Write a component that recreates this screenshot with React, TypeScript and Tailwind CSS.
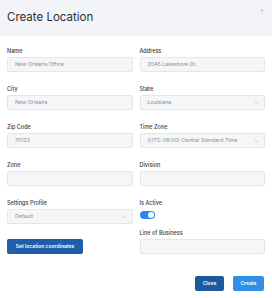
import React from "react";

const font = { fontFamily: "Inter, 'Noto Sans', sans-serif" };

function Label({ children }: { children: React.ReactNode }) {
  return (
    <div className="h-[8px] text-[5.5px] leading-[8px] font-medium text-[#3a3d42]">
      {children}
    </div>
  );
}

function Input({ value, select }: { value?: string; select?: boolean }) {
  return (
    <div className="mt-[2px] h-[15px] rounded-[2px] border border-[#e4e6ea] bg-[#f5f6f8] flex items-center justify-between pl-[7px] pr-[5px]">
      <span className="text-[5.3px] leading-none text-[#8a8e95]">{value}</span>
      {select && (
        <svg width="5" height="4" viewBox="0 0 5 4" className="shrink-0">
          <path d="M0.8 1.2 L2.5 2.8 L4.2 1.2" fill="none" stroke="#b8bcc2" strokeWidth="0.6" />
        </svg>
      )}
    </div>
  );
}

function Field({ label, value, select }: { label: string; value?: string; select?: boolean }) {
  return (
    <div>
      <Label>{label}</Label>
      <Input value={value} select={select} />
    </div>
  );
}

export default function App() {
  return (
    <div className="w-[272px] h-[298px] bg-white overflow-hidden" style={font}>
      <div className="h-[36px] bg-[#f3f4f8] flex items-center justify-between pl-[7px] pr-[8px]">
        <div className="text-[11.5px] leading-none text-[#2c2f33] font-normal">Create Location</div>
        <div className="self-start mt-[7px] text-[6px] leading-none text-[#b0b3b8]">×</div>
      </div>
      <div className="px-[7px] pt-[11px]">
        <div className="grid grid-cols-2 gap-x-[7px] gap-y-[13px]">
          <Field label="Name" value="New Orleans Office" />
          <Field label="Address" value="2045 Lakeshore Dr." />
          <Field label="City" value="New Orleans" />
          <Field label="State" value="Louisiana" select />
          <Field label="Zip Code" value="70122" />
          <Field label="Time Zone" value="(UTC-06:00) Central Standard Time" select />
          <Field label="Zone" />
          <Field label="Division" />
        </div>
        <div className="grid grid-cols-2 gap-x-[7px] mt-[13px] items-start">
          <div>
            <Field label="Settings Profile" value="Default" select />
            <button className="mt-[15px] h-[15px] w-[76px] rounded-[2px] bg-[#1f5fa9] text-white text-[5px] font-semibold leading-none">
              Set location coordinates
            </button>
          </div>
          <div>
            <Label>Is Active</Label>
            <div className="mt-[4px] h-[8px] w-[15px] rounded-full bg-[#2f86ea] flex items-center justify-end pr-[1px]">
              <div className="h-[6px] w-[6px] rounded-full bg-white" />
            </div>
            <div className="mt-[10px]">
              <Field label="Line of Business" />
            </div>
          </div>
        </div>
        <div className="flex justify-end gap-[9px] mt-[22px] pr-[1px]">
          <button className="h-[15px] w-[29px] rounded-[2px] bg-[#1c5a9f] text-white text-[5px] font-semibold leading-none">
            Close
          </button>
          <button className="h-[15px] w-[31px] rounded-[2px] bg-[#3090e8] text-white text-[5px] font-semibold leading-none">
            Create
          </button>
        </div>
      </div>
    </div>
  );
}
